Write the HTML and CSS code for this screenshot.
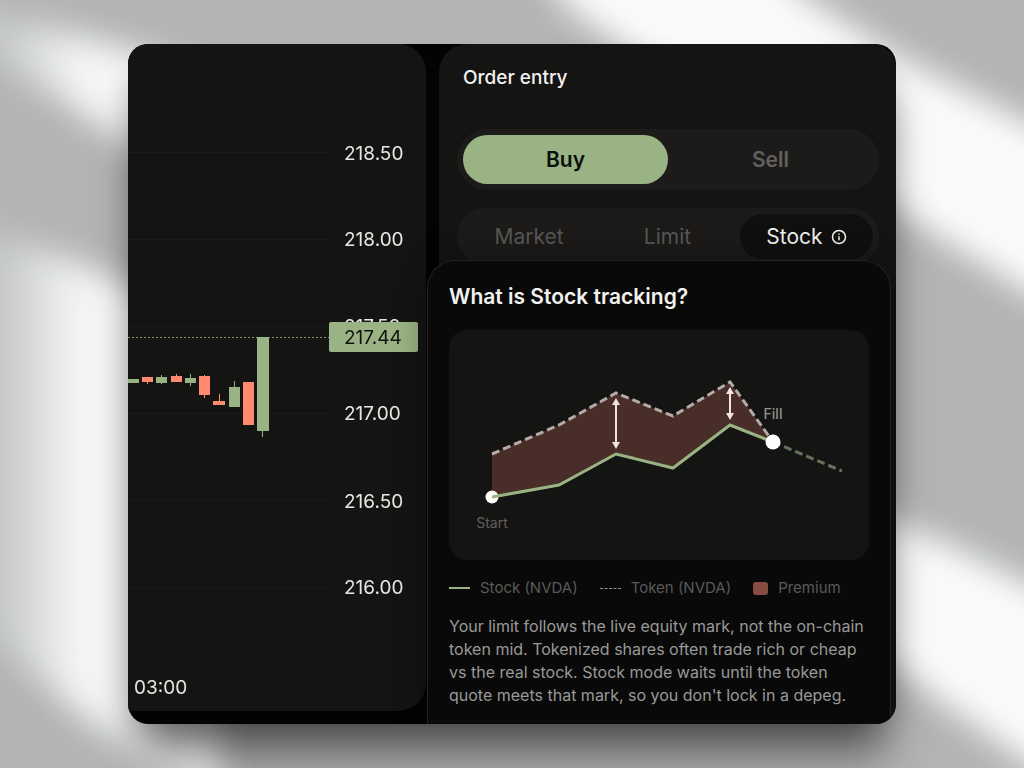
FILE: index.html
```
<!DOCTYPE html>
<html lang="en">
<head>
    <meta charset="UTF-8">
    <meta name="viewport" content="width=device-width, initial-scale=1.0">
    <title>Order entry</title>
    <link rel="stylesheet" href="styles.css">
</head>
<body>
    <svg class="backdrop" viewBox="0 0 1024 768" preserveAspectRatio="none" aria-hidden="true">
        <defs>
            <filter id="soft" x="-20%" y="-20%" width="140%" height="140%" color-interpolation-filters="sRGB">
                <feGaussianBlur stdDeviation="16"/>
            </filter>
            <linearGradient id="fade" gradientUnits="userSpaceOnUse" x1="0" y1="0" x2="80" y2="0">
                <stop offset="0" stop-color="#c4c6c6"/>
                <stop offset="1" stop-color="#f5f6f8"/>
            </linearGradient>
        </defs>
        <rect width="1024" height="768" fill="#b3b5b4"/>
        <g filter="url(#soft)">
            <path fill="url(#fade)" d="M-60 -10 L0 14 L70 33 L220 75 L220 190 L128 146 L60 98 L0 66 L-60 40Z"/>
            <path fill="#f9fafc" d="M520 -60 L740 -60 L810 0 L896 55 L960 88 L1100 160 L1100 330 L1024 290 L960 250 L896 210 L760 140 L570 10Z"/>
            <path fill="#f9fafc" d="M820 480 L896 522 L960 550 L1100 620 L1100 810 L1024 760 L960 715 L896 668 L820 620Z"/>
            <path fill="url(#fade)" d="M-60 215 L0 235 L60 255 L128 285 L220 330 L220 800 L150 765 L75 710 L0 645 L-60 590Z"/>
        </g>
    </svg>
    <main class="stage">
        <div class="card-shadow">
        <div class="card">
            <section class="chart-panel">
                <svg class="candles" viewBox="0 0 298 667" aria-label="Price chart">
                    <g class="grid">
                        <path d="M0 108.500H200M0 195.500H200M0 282.500H200M0 369.500H200M0 456.500H200M0 543.500H200"/>
                    </g>
                    <path class="last-price" d="M0 293.500H201"/>
                    <g class="up">
                        <path d="M0 335h11v4H0zM28 333h11v6H28zM57 334h11v5H57zM101 343h11v20h-11zM129 293h12v94h-12z"/>
                        <path d="M33 331h1v9h-1zM62 330h1v12h-1zM106 337h1v10h-1zM134 387h1v6h-1z"/>
                    </g>
                    <g class="down">
                        <path d="M14 333h11v5H14zM43 332h11v6H43zM71 332h11v19H71zM85 357h12v4H85zM115 338h11v43h-11z"/>
                        <path d="M19 338h1v2h-1zM48 330h1v3h-1zM76 331h1v23h-1zM91 350h1v8h-1z"/>
                    </g>
                    <g class="axis">
                        <text x="216" y="116">218.50</text>
                        <text x="216" y="202">218.00</text>
                        <text x="216" y="289">217.50</text>
                        <text x="216" y="376">217.00</text>
                        <text x="216" y="464">216.50</text>
                        <text x="216" y="550">216.00</text>
                        <text x="6" y="650">03:00</text>
                    </g>
                    <rect class="tag" x="201" y="278" width="89" height="30" rx="2"/>
                    <text class="tag-text" x="216" y="300">217.44</text>
                </svg>
            </section>
            <section class="order-panel">
                <h1 class="order-title">Order entry</h1>
                <div class="switch side-switch">
                    <button class="side active" type="button">Buy</button>
                    <button class="side" type="button">Sell</button>
                </div>
                <div class="switch type-switch">
                    <button class="type" type="button">Market</button>
                    <button class="type limit" type="button">Limit</button>
                    <button class="type active" type="button">Stock
                        <svg class="info" viewBox="0 0 16 16" aria-hidden="true">
                            <circle cx="8" cy="8" r="6.500"/>
                            <path d="M8 7.200v4M8 4.400v1.400"/>
                        </svg>
                    </button>
                </div>
            </section>
            <aside class="popover">
                <h2 class="popover-title">What is Stock tracking?</h2>
                <svg class="diagram" viewBox="0 0 420 230" aria-label="Stock and token price until fill">
                    <path class="premium" d="M43 124L110 95L167 63L224 86L281 52L324 112L281 95L224 138L167 124L110 155L43 167Z"/>
                    <path class="token" d="M43 124L110 95L167 63L224 86L281 52L324 112"/>
                    <path class="after" d="M324 112L393 141"/>
                    <circle class="dot" cx="43" cy="167" r="6.500"/>
                    <path class="stock" d="M43 167L110 155L167 124L224 138L281 95L324 112"/>
                    <circle class="dot" cx="324" cy="112" r="7.500"/>
                    <path class="arrow-line" d="M167 71V116M281 60V87"/>
                    <path class="arrow-head" d="M167 68l4 7h-8zM167 119l4-7h-8zM281 57l4 7h-8zM281 90l4-7h-8z"/>
                    <text class="start-label" x="43" y="198">Start</text>
                    <text class="fill-label" x="324" y="89">Fill</text>
                </svg>
                <ul class="legend">
                    <li><span class="key key-stock"></span>Stock (NVDA)</li>
                    <li><span class="key key-token"></span>Token (NVDA)</li>
                    <li><span class="key key-premium"></span>Premium</li>
                </ul>
                <p class="note">Your limit follows the live equity mark, not the on-chain token mid. Tokenized shares often trade rich or cheap vs the real stock. Stock mode waits until the token quote meets that mark, so you don't lock in a depeg.</p>
            </aside>
        </div>
        </div>
    </main>
</body>
</html>
```
FILE: styles.css
```
* {
    box-sizing: border-box;
}
body {
    margin: 0;
    background: #b3b5b4;
    font-family: Inter, "Liberation Sans", sans-serif;
    color: #f2f2f0;
}
button {
    border: 0;
    background: none;
    font-family: inherit;
    cursor: pointer;
}
.backdrop {
    position: fixed;
    inset: 0;
    width: 100%;
    height: 100%;
}
.stage {
    min-height: 100vh;
    padding: 44px 12.5%;
    overflow: hidden;
}
/* faint side shadow plus a heavier one that drops below the card */
.card-shadow {
    position: relative;
    border-radius: 20px;
    box-shadow: 0 48px 48px -8px rgba(0, 0, 0, 0.3), 0 24px 40px -16px rgba(0, 0, 0, 0.55);
}
.card {
    position: relative;
    display: grid;
    grid-template-columns: 298fr 457fr;
    column-gap: 13px;
    height: calc(100vh - 88px);
    min-height: 680px;
    background: #030303;
    border-radius: 20px;
    overflow: hidden;
}
/* left: price chart */
.chart-panel {
    margin-bottom: 13px;
    background: #141412;
    border-radius: 0 28px 28px 0;
    overflow: hidden;
}
.candles {
    display: block;
    width: 100%;
}
.grid path {
    stroke: #1c1c1a;
}
.last-price {
    stroke: #83976f;
    stroke-dasharray: 2 2;
}
.up {
    fill: #9ab384;
}
.down {
    fill: #ff8a70;
}
.axis text {
    fill: #e6e6e4;
    font-size: 19px;
}
.tag {
    fill: #9ab384;
}
.tag-text {
    fill: #10130d;
    font-size: 19px;
}
/* right: order form */
.order-panel {
    padding: 21px 17px 0 18px;
    background: #141412;
    border-radius: 28px 24px 0 0;
}
.order-title {
    margin: 0 0 38px 6px;
    font-size: 19px;
    font-weight: 500;
    line-height: 26px;
}
.switch {
    display: flex;
    padding: 6px;
    background: #1c1b19;
    border-radius: 31px;
}
.side {
    flex: 1;
    height: 49px;
    border-radius: 25px;
    color: #62615f;
    font-size: 21px;
    font-weight: 600;
}
.side.active {
    background: #9ab384;
    color: #0c0f0a;
}
.type-switch {
    margin-top: 18px;
}
.type {
    display: flex;
    flex: 132;
    align-items: center;
    justify-content: center;
    gap: 8px;
    height: 45px;
    padding: 0;
    border-radius: 23px;
    color: #585755;
    font-size: 21px;
}
.type.limit {
    flex: 145;
}
.type.active {
    flex: 133;
    background: #10100f;
    color: #f2f2f0;
}
.info {
    width: 16px;
    fill: none;
    stroke: currentColor;
    stroke-width: 1.5;
}
/* help popover over the form */
.popover {
    position: absolute;
    top: 216px;
    right: 5px;
    bottom: 0;
    width: 464px;
    padding: 21px 21px 0;
    background: #090909;
    border: 1px solid #232321;
    border-bottom: 0;
    border-radius: 28px 28px 0 0;
    box-shadow: 0 0 32px rgba(0, 0, 0, 0.4);
}
.popover-title {
    margin: 0 0 19px;
    font-size: 21px;
    font-weight: 600;
    line-height: 29px;
}
.diagram {
    display: block;
    width: 100%;
    background: #141412;
    border-radius: 18px;
}
.premium {
    fill: #482d28;
}
.token,
.after,
.stock {
    fill: none;
    stroke-width: 3;
}
.token {
    stroke: #b5aaa6;
    stroke-dasharray: 8 4;
}
.after {
    stroke: #64735a;
    stroke-dasharray: 8 4;
}
.stock {
    stroke: #9ab384;
}
.dot {
    fill: #fff;
}
.arrow-line {
    stroke: #eee4e2;
    stroke-width: 2;
}
.arrow-head {
    fill: #eee4e2;
}
.start-label,
.fill-label {
    fill: #62615f;
    font-size: 14px;
    text-anchor: middle;
}
.fill-label {
    fill: #92918f;
    font-weight: 500;
}
.legend {
    display: flex;
    gap: 22px;
    margin: 18px 0 17px;
    padding: 0;
    list-style: none;
    color: #5a5958;
    font-size: 15px;
    line-height: 20px;
}
.legend li {
    display: flex;
    align-items: center;
    gap: 10px;
    white-space: nowrap;
}
.key {
    width: 21px;
}
.key-stock {
    border-top: 2px solid #9ab384;
}
.key-token {
    border-top: 1px dashed #92918f;
}
.key-premium {
    width: 15px;
    height: 13px;
    background: #874c42;
    border-radius: 3px;
}
.note {
    margin: 0;
    color: #9a9998;
    font-size: 16px;
    line-height: 23px;
}
```
